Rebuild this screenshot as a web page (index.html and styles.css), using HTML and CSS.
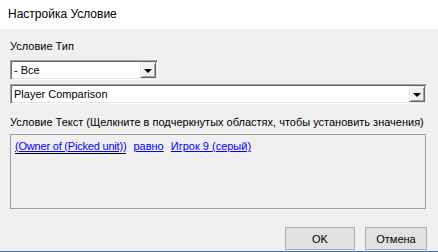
FILE: index.html
```html
<!DOCTYPE html>
<html lang="ru">
<head>
    <meta charset="UTF-8">
    <title>Настройка Условие</title>
    <link rel="stylesheet" href="styles.css">
</head>
<body>
    <div class="window">
        <div class="titlebar">Настройка Условие</div>
        <div class="content">
            <div class="label label-type">Условие Тип</div>
            <div class="combo combo-short">
                <span class="combo-text">- Все</span>
                <span class="combo-btn"><span class="arrow"></span></span>
            </div>
            <div class="combo combo-wide">
                <span class="combo-text">Player Comparison</span>
                <span class="combo-btn"><span class="arrow"></span></span>
            </div>
            <div class="label label-text">Условие Текст (Щелкните в подчеркнутых областях, чтобы установить значения)</div>
            <div class="text-box">
                <a href="#" class="param active">(Owner of (Picked unit))</a>
                <a href="#" class="param">равно</a>
                <a href="#" class="param">Игрок 9 (серый)</a>
            </div>
            <div class="buttons">
                <button class="btn btn-ok">OK</button>
                <button class="btn btn-cancel">Отмена</button>
            </div>
        </div>
        <div class="bottom-line"></div>
    </div>
</body>
</html>
```

FILE: styles.css
```css
body {
    margin: 0;
    background: #f0f0f0;
    font-family: 'Liberation Sans', Arial, sans-serif;
    font-size: 11px;
    color: #000;
}

.window {
    width: 438px;
    height: 252px;
    display: flex;
    flex-direction: column;
    overflow: hidden;
}

/* заголовок окна */
.titlebar {
    height: 29px;
    line-height: 29px;
    padding-left: 8px;
    background: #ffffff;
    font-size: 12px;
}

.content {
    flex: 1;
    display: flex;
    flex-direction: column;
    padding: 0 11px 0 10px;
}

.label {
    height: 13px;
    line-height: 13px;
}

.label-type {
    margin-top: 11px;
}

.label-text {
    margin-top: 12px;
}

/* выпадающие списки */
.combo {
    box-sizing: border-box;
    height: 20px;
    display: flex;
    align-items: stretch;
    background: #ffffff;
    border-top: 1px solid #a0a0a0;
    border-left: 1px solid #a0a0a0;
    border-right: 1px solid #ffffff;
    border-bottom: 1px solid #ffffff;
    box-shadow: inset 1px 1px 0 #696969, inset -1px -1px 0 #e3e3e3;
}

.combo-short {
    width: 148px;
    margin-top: 7px;
}

.combo-wide {
    width: 417px;
    margin-top: 4px;
}

.combo-text {
    flex: 1;
    padding-left: 2px;
    margin-left: 1px;
    line-height: 18px;
}

.combo-btn {
    box-sizing: border-box;
    width: 16px;
    margin: 1px 1px 1px 0;
    background: #f0f0f0;
    border-top: 1px solid #e3e3e3;
    border-left: 1px solid #e3e3e3;
    border-right: 1px solid #696969;
    border-bottom: 1px solid #696969;
    box-shadow: inset 1px 1px 0 #ffffff, inset -1px -1px 0 #a0a0a0;
    display: flex;
    align-items: center;
    justify-content: center;
}

.arrow {
    width: 0;
    height: 0;
    border-left: 4px solid transparent;
    border-right: 4px solid transparent;
    border-top: 4px solid #000;
    margin-top: 1px;
}

/* поле текста условия */
.text-box {
    box-sizing: border-box;
    width: 416px;
    height: 75px;
    margin-top: 5px;
    border: 1px solid #a0a0a0;
    padding: 5px 4px;
    line-height: 13px;
}

.param {
    color: #0000ff;
    text-decoration: underline;
    margin-right: 4px;
}

.param.active {
    letter-spacing: -0.2px;
    padding-bottom: 1px;
    border-bottom: 1px solid #000;
}

.buttons {
    display: flex;
    justify-content: flex-end;
    gap: 10px;
    margin-top: 18px;
}

.btn {
    height: 23px;
    padding: 0;
    background: #e1e1e1;
    border: 1px solid #adadad;
    font-family: 'Liberation Sans', Arial, sans-serif;
    font-size: 11px;
    color: #000;
}

.btn-ok {
    width: 70px;
}

.btn-cancel {
    width: 62px;
}

.bottom-line {
    height: 1px;
    background: #2b79c4;
}
```
